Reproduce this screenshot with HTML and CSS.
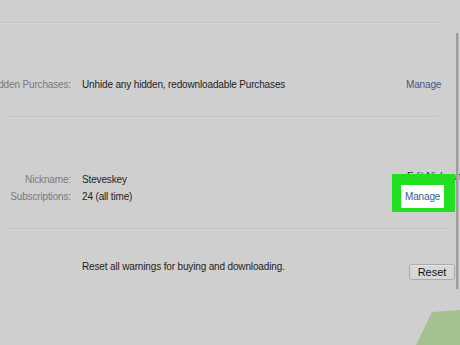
FILE: index.html
```html
<!DOCTYPE html>
<html lang="en">
<head>
    <meta charset="UTF-8">
    <meta name="viewport" content="width=device-width, initial-scale=1.0">
    <title>Account Information</title>
    <link rel="stylesheet" href="styles.css">
</head>
<body>
    <div class="page">
        <div class="section section-top"></div>
        <div class="divider divider-top"></div>

        <div class="section section-hidden">
            <div class="row">
                <div class="label"><span>Hidden Purchases:</span></div>
                <div class="value">Unhide any hidden, redownloadable Purchases</div>
                <div class="action"><a class="link" href="#">Manage</a></div>
            </div>
        </div>
        <div class="divider divider-mid"></div>

        <div class="section section-profile">
            <div class="row">
                <div class="label"><span>Nickname:</span></div>
                <div class="value">Steveskey</div>
                <div class="action"><a class="link link-dark" href="#">Edit Nickname</a></div>
            </div>
            <div class="row">
                <div class="label"><span>Subscriptions:</span></div>
                <div class="value">24 (all time)</div>
                <div class="action">
                    <div class="highlight"></div>
                    <a class="link link-boxed" href="#">Manage</a>
                </div>
            </div>
        </div>
        <div class="divider divider-low"></div>

        <div class="section section-reset">
            <div class="row row-reset">
                <div class="label"><span></span></div>
                <div class="value">Reset all warnings for buying and downloading.</div>
                <div class="action"><button class="reset-button">Reset</button></div>
            </div>
        </div>

        <div class="scrollbar"></div>

        <svg class="corner" width="44" height="35" viewBox="0 0 44 35">
            <polygon points="0,35 16,2 44,0 44,35" fill="#a4c28f"/>
        </svg>
    </div>
</body>
</html>
```

FILE: styles.css
```css
body {
    margin: 0;
    background-color: #cfcfcf;
    font-family: "Liberation Sans", Arial, sans-serif;
    font-size: 10px;
    letter-spacing: -0.15px;
    color: #222;
}

.page {
    position: relative;
    width: 460px;
    height: 345px;
    overflow: hidden;
}

/* section dividers */
.divider {
    height: 1px;
    background-color: #c1c1c1;
    box-shadow: 0 1px 0 #d7d7d7;
}

.divider-top {
    margin-right: 22px;
}

.divider-mid {
    margin-left: 8px;
    margin-right: 22px;
}

.divider-low {
    margin-left: 8px;
    margin-right: 12px;
}

.section-top {
    height: 22px;
}

.section-hidden {
    padding: 53px 0 23px 0;
}

.section-profile {
    padding: 54px 0 23px 0;
}

.section-reset {
    padding-top: 31px;
}

/* rows */
.row {
    display: flex;
    align-items: center;
    height: 17px;
    white-space: nowrap;
}

.label {
    width: 71px;
    flex-shrink: 0;
    display: flex;
    justify-content: flex-end;
    color: #7a7a7a;
}

.value {
    flex: 1;
    margin-left: 11px;
    color: #1e1e1e;
}

.action {
    position: relative;
    width: 54px;
    flex-shrink: 0;
}

.link {
    color: #3c5a8c;
    text-decoration: none;
}

.link-dark {
    position: relative;
    top: -3px;
    left: 1px;
    color: #333;
}

.link-boxed {
    position: relative;
    display: inline-block;
    padding: 6px 4px;
    margin-left: -5px;
    background-color: #fff;
}

/* green annotation box */
.highlight {
    position: absolute;
    left: -14px;
    top: -11px;
    width: 63px;
    height: 38px;
    background-color: #22e021;
}

.row-reset {
    height: 18px;
}

.row-reset .value {
    position: relative;
    top: -3px;
}

.reset-button {
    margin-left: 3px;
    margin-top: 6px;
    width: 46px;
    height: 16px;
    padding: 0;
    font-family: "Liberation Sans", Arial, sans-serif;
    font-size: 11px;
    color: #111;
    background-color: #d8d8d8;
    border: 1px solid #aaa;
    border-radius: 3px;
    box-shadow: inset 0 1px 0 #e6e6e6;
}

.scrollbar {
    position: absolute;
    left: 456px;
    top: 33px;
    width: 2px;
    height: 256px;
    background-color: #9c9c9c;
    border-right: 1px solid #bcbcbc;
}

.corner {
    position: absolute;
    right: 0;
    bottom: 0;
    display: block;
}
```
